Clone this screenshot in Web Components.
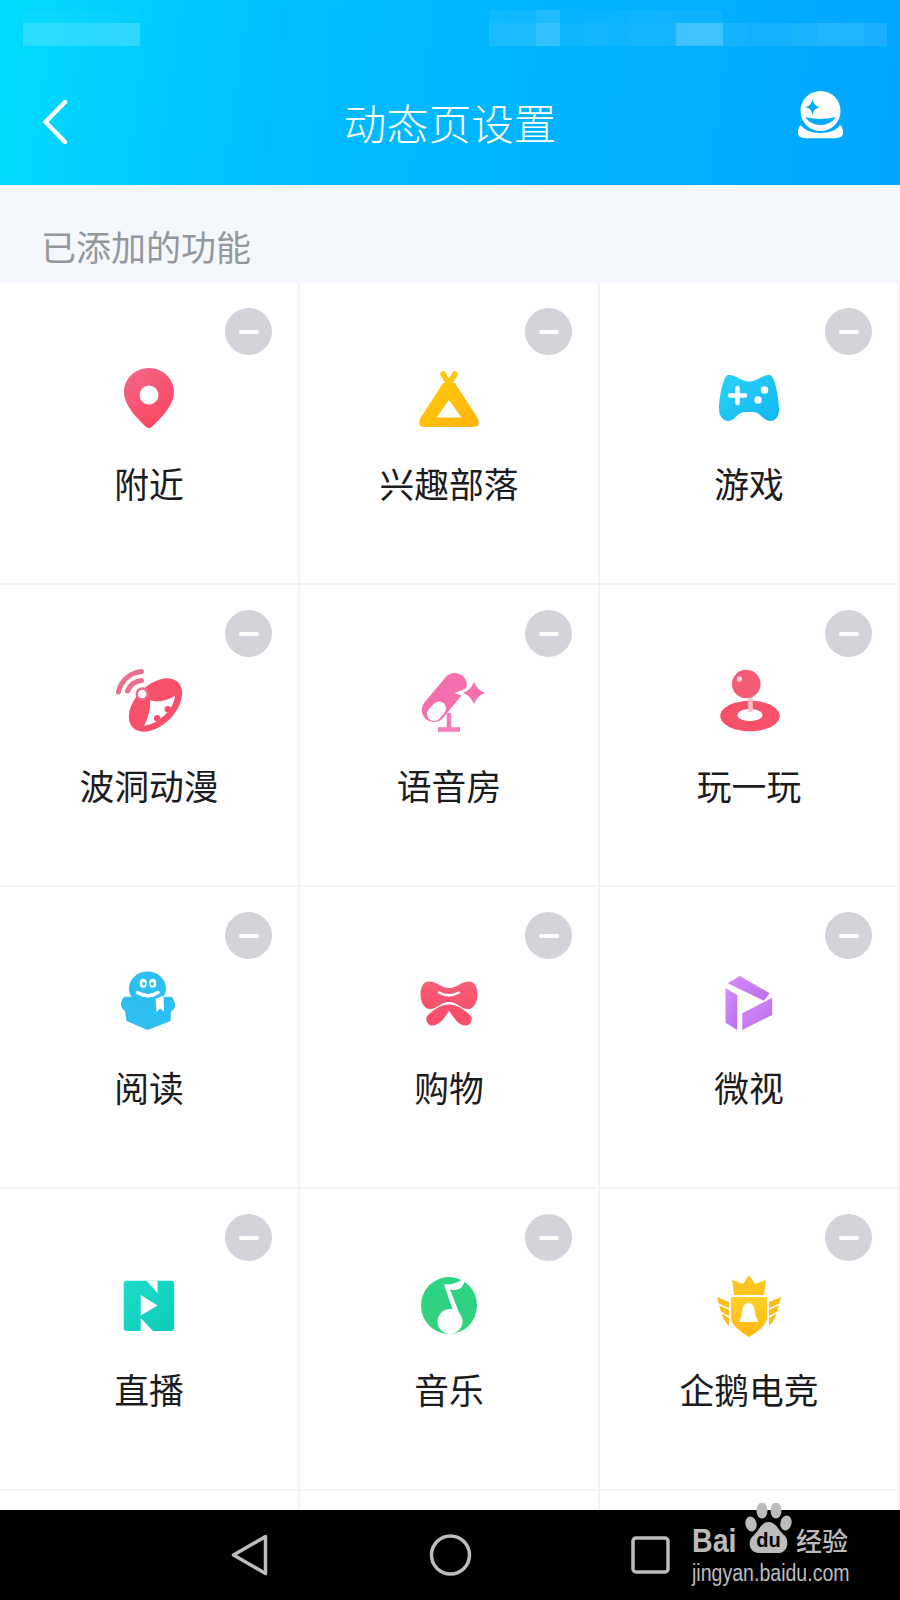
<!DOCTYPE html>
<html lang="zh">
<head>
<meta charset="utf-8">
<title>动态页设置</title>
<style>
    html, body { margin: 0; padding: 0; background: #fff; }
    body { width: 900px; height: 1600px; overflow: hidden; }
</style>
</head>
<body>
<settings-page>
    <page-header slot="header" title="动态页设置"></page-header>
    <section-label slot="header">已添加的功能</section-label>
    <feature-grid>
        <feature-cell name="附近" icon="pin"></feature-cell>
        <feature-cell name="兴趣部落" icon="tent"></feature-cell>
        <feature-cell name="游戏" icon="gamepad"></feature-cell>
        <feature-cell name="波洞动漫" icon="dish"></feature-cell>
        <feature-cell name="语音房" icon="mic"></feature-cell>
        <feature-cell name="玩一玩" icon="joystick"></feature-cell>
        <feature-cell name="阅读" icon="reader"></feature-cell>
        <feature-cell name="购物" icon="bow"></feature-cell>
        <feature-cell name="微视" icon="weishi"></feature-cell>
        <feature-cell name="直播" icon="live"></feature-cell>
        <feature-cell name="音乐" icon="music"></feature-cell>
        <feature-cell name="企鹅电竞" icon="esports"></feature-cell>
        <feature-cell></feature-cell>
        <feature-cell></feature-cell>
        <feature-cell></feature-cell>
    </feature-grid>
    <system-nav slot="footer"></system-nav>
</settings-page>

<script>
const FONT = '"Noto Sans CJK SC", "Noto Sans", sans-serif';

const ICONS = {
    pin: `
        <defs><linearGradient id="g" x1="0" y1="0" x2="0.6" y2="1"><stop offset="0" stop-color="#f2688c"/><stop offset="1" stop-color="#fc4761"/></linearGradient></defs>
        <path fill="url(#g)" d="M32 2C18 2 7 13 7 26C7 40 22 54 29 61Q32 63 35 61C42 54 57 40 57 26C57 13 46 2 32 2Z"/>
        <circle cx="32" cy="29" r="9.5" fill="#fff"/>`,
    tent: `
        <defs><linearGradient id="g" x1="0" y1="0" x2="1" y2="1"><stop offset="0" stop-color="#ffcb0a"/><stop offset="1" stop-color="#ffb30f"/></linearGradient></defs>
        <path d="M26 8L32 18M38 8L32 18" stroke="#ffc60c" stroke-width="5.5" stroke-linecap="round" fill="none"/>
        <path fill="url(#g)" fill-rule="evenodd" d="M26 17L38 17L60.5 52Q64.5 61 56 61L8 61Q-0.5 61 3.5 52ZM32 34L19.5 51.5L44.5 51.5Z"/>`,
    gamepad: `
        <defs><linearGradient id="g" x1="0" y1="0" x2="1" y2="1"><stop offset="0" stop-color="#2cd3f6"/><stop offset="1" stop-color="#10b6ef"/></linearGradient></defs>
        <path fill="url(#g)" d="M11 9C18 8 24 15.5 32 15.5C40 15.5 46 8 53 9C58 10 62 33 62 44C62 52 57 55 53 55C46 55 43 46 37 46L27 46C21 46 18 55 11 55C7 55 2 51 2 43C2 33 6 10 11 9Z"/>
        <path d="M20.5 22V37M13 29.5H28" stroke="#fff" stroke-width="4.5" stroke-linecap="round"/>
        <circle cx="47.5" cy="24" r="3.8" fill="#fff"/><circle cx="41" cy="34" r="3.8" fill="#fff"/>`,
    dish: `
        <path d="M1.5 24A26 26 0 0 1 24.5 3.5M10.5 23A17 17 0 0 1 24.5 12.5" stroke="#e9708f" stroke-width="5" stroke-linecap="round" fill="none"/>
        <ellipse cx="38.5" cy="37" rx="32" ry="20" transform="rotate(-45 38.5 37)" fill="#f6506a"/>
        <path d="M33 32C40 35 49 33 58 28C57 41 43 55 27 58C31 49 34 41 33 32Z" fill="#fff"/>
        <circle cx="50.8" cy="41.3" r="3.2" fill="#f6506a"/><circle cx="40.2" cy="50.3" r="3.2" fill="#f6506a"/>
        <circle cx="25.2" cy="26" r="5.5" fill="#fff" stroke="#f06a85" stroke-width="2.5"/>`,
    mic: `
        <path d="M32 45V60M21 61.5H43" stroke="#f67ab5" stroke-width="4.5"/>
        <path d="M16.8 42L37.8 17" stroke="#f56fae" stroke-width="24" stroke-linecap="round"/>
        <path d="M17 46L22 40.5" stroke="#fff" stroke-width="14" stroke-linecap="round"/>
        <path d="M57 14Q60 22 68 25Q60 28 57 36Q54 28 46 25Q54 22 57 14Z" fill="#f56fae" stroke="#fff" stroke-width="6" paint-order="stroke"/>`,
    joystick: `
        <path fill="#f7506a" fill-rule="evenodd" d="M33 32.7C49.4 32.7 62.7 39.5 62.7 48C62.7 56.5 49.4 63.3 33 63.3C16.6 63.3 3.3 56.5 3.3 48C3.3 39.5 16.6 32.7 33 32.7ZM33 41C26 41 20.5 43.5 20.5 47C20.5 50.5 26 53 33 53C40 53 45.5 50.5 45.5 47C45.5 43.5 40 41 33 41Z"/>
        <path d="M33.5 28V44" stroke="#fbc4cc" stroke-width="4.5"/>
        <circle cx="29.2" cy="16" r="14.3" fill="#f65b75"/>
        <circle cx="22.5" cy="11" r="2.7" fill="#fcd4da"/>`,
    reader: `
        <path d="M7 27Q19 26 30.5 31Q42 26 55 27Q59 33 58 37Q56 41 54 41L53.5 51L30.5 60L9.5 51L8 41Q4 38 4 35Q4 30 7 27Z" fill="#2cbff0"/>
        <ellipse cx="30.5" cy="18.5" rx="18.5" ry="17" fill="#2cbff0"/>
        <ellipse cx="26.2" cy="13.3" rx="3.5" ry="4.5" fill="#fff"/><ellipse cx="35.8" cy="13.3" rx="3.5" ry="4.5" fill="#fff"/>
        <circle cx="26.8" cy="13.8" r="1.7" fill="#2cbff0"/><circle cx="35.2" cy="13.8" r="1.7" fill="#2cbff0"/>
        <path d="M20.5 22.5Q31 29 41 22.5" stroke="#fff" stroke-width="3.5" fill="none" stroke-linecap="round"/>
        <path d="M38.5 29L46.5 25.5L47 41.5L43 38.5L39.5 42Z" fill="#fff"/>`,
    bow: `
        <defs><linearGradient id="g" x1="0" y1="0" x2="0" y2="1"><stop offset="0" stop-color="#f66078"/><stop offset="1" stop-color="#f6506a"/></linearGradient></defs>
        <path fill="url(#g)" d="M12 11.5C20 11.5 24 18 32 18C40 18 44 11.5 52 11.5C58 11.5 60.5 18 60.5 24C60.5 32 57 39 51 39C44 39 40 32 32 32C24 32 20 39 13 39C7 39 3.5 32 3.5 24C3.5 18 6 11.5 12 11.5Z"/>
        <path d="M22 22.5Q32 28 42 22.5" stroke="#fff" stroke-width="2.5" fill="none" stroke-linecap="round"/>
        <path fill="#f6506a" d="M9.5 47C14 41 24 34.5 32 34.5C40 34.5 50 41 54.5 47C55.5 52 52 56 48 55.5C44 55 40 52 38 49L32 41L26.5 49C24 52 20 55 16 55.5C12 56 8.5 52 9.5 47Z"/>`,
    weishi: `
        <defs><linearGradient id="g" x1="0" y1="0" x2="1" y2="1"><stop offset="0" stop-color="#d88cf6"/><stop offset="1" stop-color="#b96eef"/></linearGradient></defs>
        <g fill="url(#g)"><path d="M22.8 6L52.8 23.3L46.8 30.7L10.8 13.3Z"/><path d="M8.5 18.3L20.2 25V60L8.5 52.7Z"/><path d="M55.2 27.7V45L25.2 60V43.3Z"/></g>`,
    live: `
        <defs><linearGradient id="g" x1="0" y1="0" x2="1" y2="1"><stop offset="0" stop-color="#1cdcca"/><stop offset="1" stop-color="#0ccbbb"/></linearGradient></defs>
        <rect x="6.7" y="8.7" width="50.5" height="50.3" rx="3" fill="url(#g)"/>
        <path d="M29.5 8.7H40.6V21Z M23.7 59V46L36 59Z M23.7 23L40.6 33.5L23.7 43.5Z" fill="#fff"/>`,
    music: `
        <defs><linearGradient id="g" x1="0" y1="0" x2="0" y2="1"><stop offset="0" stop-color="#2cd585"/><stop offset="1" stop-color="#34d07e"/></linearGradient></defs>
        <ellipse cx="32" cy="33.5" rx="28" ry="28.5" fill="url(#g)"/>
        <circle cx="33" cy="49.5" r="12.5" fill="#fff"/>
        <path d="M27 12.5L31 12.5L45 48L40 50Z" fill="#fff"/>
        <path d="M27 12.5C34 13 42 11 47.5 5C48 11 46 15 42 17C38 18.5 34 18 30.5 17Z" fill="#fff"/>`,
    esports: `
        <defs><linearGradient id="g" x1="0" y1="0" x2="0" y2="1"><stop offset="0" stop-color="#ffd02a"/><stop offset="1" stop-color="#ffb70f"/></linearGradient></defs>
        <path d="M32 3L38 12L49 8L47 23L17 23L15 8L26 12Z" fill="#fdc41e"/>
        <path d="M14 25H50V46Q50 54 32 65Q14 54 14 46Z" fill="url(#g)"/>
        <path d="M31.5 31C26.5 31 25 37 25 41C25 44 22.5 47 22.5 50L41 50C41 47 38 44 38 41C38 37 36.5 31 31.5 31Z" fill="#fff"/>
        <path d="M0 25L12 30V54Q6 48 4 40Z" fill="#fdbe1a"/>
        <path d="M64 25L52 30V54Q58 48 60 40Z" fill="#fdbe1a"/>
        <path d="M1 32L12 37M3 40L12 45" stroke="#fff" stroke-width="1.5"/>
        <path d="M63 32L52 37M61 40L52 45" stroke="#fff" stroke-width="1.5"/>`
};

class SettingsPage extends HTMLElement {
    constructor() {
        super();
        this.attachShadow({ mode: 'open' });
        this.shadowRoot.innerHTML = `
            <style>
                :host {
                    display: flex;
                    flex-direction: column;
                    width: 900px;
                    height: 1600px;
                    font-family: ${FONT};
                    background: #fff;
                }
                .content { flex: 1; min-height: 0; overflow: hidden; }
            </style>
            <slot name="header"></slot>
            <div class="content"><slot></slot></div>
            <slot name="footer"></slot>
        `;
    }
}

class StatusMosaic extends HTMLElement {
    constructor() {
        super();
        this.attachShadow({ mode: 'open' });
        const col = (a, w = 23.4) => `<i style="width:${w}px;background:rgba(255,255,255,${a})"></i>`;
        // pixelated status bar, one row of faint squares above one row of stronger ones
        const leftTop = [.03, .03, .03, .03, .02].map(a => col(a)).join('');
        const leftBottom = [.17, .17, .17, .17, .19].map(a => col(a)).join('');
        const rightTop = [.06, .06, .12, .02, .03, .03, .05, .06, .05, .05, 0, 0, 0, 0, 0, 0, 0].map(a => col(a)).join('');
        const rightBottom = [.1, .1, .2, .05, .07, .06, .08, .08, .25, .25, .08, .07, .07, .1, .13, .12, .1].map(a => col(a)).join('');
        this.shadowRoot.innerHTML = `
            <style>
                :host { display: flex; justify-content: space-between; height: 36px; margin-top: 10px; padding: 0 13px 0 23px; }
                .block { display: flex; flex-direction: column; }
                .row { display: flex; }
                .row.top { height: 13px; }
                .row.bottom { height: 23px; }
                i { display: block; height: 100%; }
            </style>
            <div class="block"><div class="row top">${leftTop}</div><div class="row bottom">${leftBottom}</div></div>
            <div class="block"><div class="row top">${rightTop}</div><div class="row bottom">${rightBottom}</div></div>
        `;
    }
}

class PageHeader extends HTMLElement {
    constructor() {
        super();
        this.attachShadow({ mode: 'open' });
    }

    connectedCallback() {
        this.shadowRoot.innerHTML = `
            <style>
                :host {
                    display: block;
                    height: 185px;
                    background: linear-gradient(98deg, #00dcff 0%, #00bdff 32%, #00a6ff 100%);
                    color: #fff;
                }
                .bar {
                    display: grid;
                    grid-template-columns: 1fr auto 1fr;
                    align-items: start;
                    padding: 0 42px;
                }
                .back { display: block; margin-top: 54px; }
                .title { margin-top: 48px; font-size: 42.5px; line-height: 56px; font-weight: 300; }
                .egg { display: block; justify-self: end; margin: 45px 14px 0 0; }
            </style>
            <status-mosaic></status-mosaic>
            <div class="bar">
                <svg class="back" width="28" height="44" viewBox="0 0 28 44"><path d="M23 2L3.500 22L23 42" fill="none" stroke="#fff" stroke-width="4.5" stroke-linecap="round" stroke-linejoin="round"/></svg>
                <div class="title">${this.getAttribute('title')}</div>
                <svg class="egg" width="47" height="48" viewBox="0 0 47 48">
                    <circle cx="23.5" cy="20" r="20" fill="#fff"/>
                    <path d="M15.5 8Q16.5 15 23 16Q16.5 17 15.5 24Q14.5 17 8 16Q14.5 15 15.5 8Z" fill="#00aaff"/>
                    <path d="M8 26Q23.5 30 39 26Q33 34 23.5 34Q14 34 8 26Z" fill="#00aaff"/>
                    <path d="M1 37Q1.500 34 4 33C10 44 37 44 43 33Q45.500 34 46 37L47 41Q47 48 38 48L9 48Q0 48 0 41Z" fill="#fff" stroke="#00a8ff" stroke-width="1.5"/>
                </svg>
            </div>
        `;
    }
}

class SectionLabel extends HTMLElement {
    constructor() {
        super();
        this.attachShadow({ mode: 'open' });
        this.shadowRoot.innerHTML = `
            <style>
                :host {
                    display: flex;
                    align-items: flex-end;
                    box-sizing: border-box;
                    height: 98px;
                    padding: 0 0 14px 41px;
                    background: #f4f7fb;
                    color: #93979e;
                    font-size: 35px;
                    line-height: 46px;
                }
            </style>
            <slot></slot>
        `;
    }
}

class FeatureGrid extends HTMLElement {
    constructor() {
        super();
        this.attachShadow({ mode: 'open' });
        this.shadowRoot.innerHTML = `
            <style>
                :host {
                    display: grid;
                    grid-template-columns: repeat(3, 300px);
                    grid-auto-rows: 302px;
                }
            </style>
            <slot></slot>
        `;
    }
}

class RemoveBadge extends HTMLElement {
    constructor() {
        super();
        this.attachShadow({ mode: 'open' });
        this.shadowRoot.innerHTML = `
            <style>
                :host {
                    position: absolute;
                    top: 25px;
                    right: 26px;
                    display: flex;
                    align-items: center;
                    justify-content: center;
                    width: 47px;
                    height: 47px;
                    border-radius: 50%;
                    background: #d2d4da;
                }
                i { display: block; width: 20px; height: 4px; border-radius: 2px; background: #fff; }
            </style>
            <i></i>
        `;
    }
}

class FeatureCell extends HTMLElement {
    constructor() {
        super();
        this.attachShadow({ mode: 'open' });
    }

    connectedCallback() {
        const name = this.getAttribute('name');
        const icon = ICONS[this.getAttribute('icon')];
        const body = name ? `
            <remove-badge></remove-badge>
            <svg width="64" height="64" viewBox="0 0 64 64">${icon}</svg>
            <div class="name">${name}</div>
        ` : '';
        this.shadowRoot.innerHTML = `
            <style>
                :host {
                    position: relative;
                    display: flex;
                    flex-direction: column;
                    align-items: center;
                    box-sizing: border-box;
                    padding-top: 83px;
                    border-right: 2px solid #f3f3f5;
                    border-bottom: 2px solid #f3f3f5;
                }
                svg { display: block; overflow: visible; }
                .name { margin-top: 29px; font-size: 34.8px; line-height: 48px; color: #1c1c1e; }
            </style>
            ${body}
        `;
    }
}

class BaiduMark extends HTMLElement {
    constructor() {
        super();
        this.attachShadow({ mode: 'open' });
        this.shadowRoot.innerHTML = `
            <style>
                :host {
                    position: absolute;
                    left: 692px;
                    top: -7px;
                    display: flex;
                    flex-direction: column;
                    width: 162px;
                    color: #bcbcbc;
                    font-family: "Liberation Sans", sans-serif;
                }
                .top { display: flex; align-items: flex-end; height: 50px; }
                .bai { width: 53px; font-size: 34px; line-height: 34px; font-weight: 700; transform: scaleX(.84); transform-origin: left; margin-bottom: -4px; }
                .paw { position: relative; width: 47px; height: 50px; flex: none; }
                .paw svg { display: block; }
                .du { position: absolute; left: 0; right: 0; bottom: 1px; text-align: center; font-size: 20px; line-height: 24px; font-weight: 700; color: #000; }
                .jy { margin-left: 4px; font-family: ${FONT}; font-size: 26px; line-height: 30px; font-weight: 500; margin-bottom: -2px; }
                .url { margin-top: 8px; font-size: 23px; line-height: 24px; white-space: nowrap; transform: scaleX(.85); transform-origin: left; }
            </style>
            <div class="top">
                <div class="bai">Bai</div>
                <div class="paw">
                    <svg width="47" height="50" viewBox="0 0 47 50" fill="#bcbcbc">
                        <ellipse cx="6" cy="21" rx="5.5" ry="7.5" transform="rotate(-15 6 21)"/>
                        <ellipse cx="17" cy="7.5" rx="5.5" ry="8"/>
                        <ellipse cx="31" cy="7.5" rx="5.5" ry="8"/>
                        <ellipse cx="41" cy="20" rx="5.5" ry="7.5" transform="rotate(15 41 20)"/>
                        <path d="M23.5 19C31 19 33 27 39 32C45 37 43 50 33 50H14C4 50 2 38 8 33C14 28 16 19 23.5 19Z"/>
                    </svg>
                    <div class="du">du</div>
                </div>
                <div class="jy">经验</div>
            </div>
            <div class="url">jingyan.baidu.com</div>
        `;
    }
}

class SystemNav extends HTMLElement {
    constructor() {
        super();
        this.attachShadow({ mode: 'open' });
        this.shadowRoot.innerHTML = `
            <style>
                :host {
                    position: relative;
                    display: block;
                    flex: none;
                    height: 90px;
                    background: #000;
                }
                .keys {
                    display: flex;
                    align-items: center;
                    box-sizing: border-box;
                    height: 90px;
                    padding: 0 0 0 231px;
                }
                svg { display: block; flex: none; }
                .home { margin-left: 161px; }
                .recent { margin-left: 159px; }
            </style>
            <div class="keys">
                <svg width="37" height="42" viewBox="0 0 37 42"><path d="M34.5 2.5L2.5 21L34.5 39.5Z" fill="none" stroke="#bdbdbd" stroke-width="3.5" stroke-linejoin="round"/></svg>
                <svg class="home" width="43" height="42" viewBox="0 0 43 42"><circle cx="21.5" cy="21" r="19" fill="none" stroke="#bdbdbd" stroke-width="3.5"/></svg>
                <svg class="recent" width="39" height="38" viewBox="0 0 39 38"><rect x="2" y="2" width="35" height="34" rx="3" fill="none" stroke="#bdbdbd" stroke-width="3.5"/></svg>
            </div>
            <baidu-mark></baidu-mark>
        `;
    }
}

customElements.define('settings-page', SettingsPage);
customElements.define('status-mosaic', StatusMosaic);
customElements.define('page-header', PageHeader);
customElements.define('section-label', SectionLabel);
customElements.define('feature-grid', FeatureGrid);
customElements.define('remove-badge', RemoveBadge);
customElements.define('feature-cell', FeatureCell);
customElements.define('baidu-mark', BaiduMark);
customElements.define('system-nav', SystemNav);
</script>
</body>
</html>
